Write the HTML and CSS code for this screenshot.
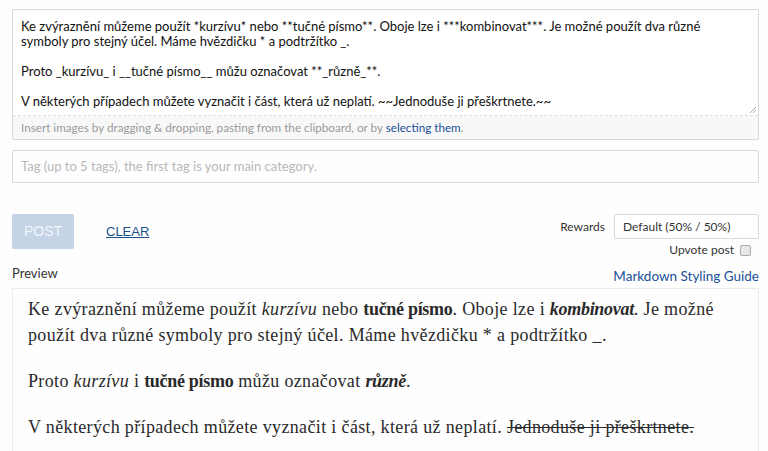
FILE: index.html
```html
<!DOCTYPE html>
<html lang="cs">
<head>
<meta charset="utf-8">
<title>Editor</title>
<link rel="stylesheet" href="styles.css">
</head>
<body>
<div class="page">
  <div class="editor">
    <div class="textarea">
      <p>Ke zvýraznění můžeme použít *kurzívu* nebo **tučné písmo**. Oboje lze i ***kombinovat***. Je možné použít dva různé symboly pro stejný účel. Máme hvězdičku * a podtržítko _.</p>
      <p>Proto _kurzívu_ i __tučné písmo__ můžu označovat **_různě_**.</p>
      <p>V některých případech můžete vyznačit i část, která už neplatí. ~~Jednoduše ji přeškrtnete.~~</p>
      <svg class="grip" width="8" height="8" viewBox="0 0 8 8"><path d="M7 1L1 7M7 4L4 7" stroke="#aaa" stroke-width="1"/></svg>
    </div>
    <div class="dropzone">Insert images by dragging &amp; dropping, pasting from the clipboard, or by <a href="#">selecting them</a>.</div>
  </div>

  <div class="tags">Tag (up to 5 tags), the first tag is your main category.</div>

  <div class="actions">
    <div class="buttons">
      <span class="post">POST</span>
      <a class="clear" href="#">CLEAR</a>
    </div>
    <div class="options">
      <div class="rewards">
        <span class="label">Rewards</span>
        <span class="select">Default (50% / 50%)</span>
      </div>
      <div class="upvote">
        <span>Upvote post</span>
        <span class="checkbox"></span>
      </div>
    </div>
  </div>

  <div class="preview-head">
    <span class="preview-label">Preview</span>
    <a class="guide" href="#">Markdown Styling Guide</a>
  </div>

  <div class="preview">
    <p>Ke zvýraznění můžeme použít <em>kurzívu</em> nebo <strong>tučné písmo</strong>. Oboje lze i <strong><em>kombinovat</em></strong>. Je možné použít dva různé symboly pro stejný účel. Máme hvězdičku * a podtržítko _.</p>
    <p>Proto <em>kurzívu</em> i <strong>tučné písmo</strong> můžu označovat <strong><em>různě</em></strong>.</p>
    <p>V některých případech můžete vyznačit i část, která už neplatí. <del>Jednoduše ji přeškrtnete.</del></p>
  </div>
</div>
</body>
</html>
```
FILE: styles.css
```css
html, body {
  margin: 0;
  padding: 0;
  background: #fefefe;
}

.page {
  padding: 9px 9px 0 12px;
  font-family: "Lato", "Open Sans", sans-serif;
  color: #333;
}

.editor {
  border: 1px solid #d8d8d8;
  border-radius: 2px;
  background: #fff;
}

.textarea {
  position: relative;
  height: 96px;
  padding: 9px 8px 0 8px;
  font-size: 13px;
  line-height: 15px;
  color: #111;
  border-bottom: 1px dashed #dedede;
}

.textarea p {
  margin: 0 0 15px 0;
}

.grip {
  position: absolute;
  right: 1px;
  bottom: 1px;
}

.dropzone {
  background: #f8f8f8;
  height: 23px;
  line-height: 23px;
  padding: 0 8px;
  font-size: 11.7px;
  color: #9a9a9a;
}

.dropzone a {
  color: #1a5099;
  text-decoration: none;
}

.tags {
  margin-top: 10px;
  height: 31px;
  border: 1px solid #d8d8d8;
  border-radius: 2px;
  line-height: 31px;
  padding: 0 8px;
  font-size: 13px;
  color: #b8b8b8;
}

.actions {
  margin-top: 31px;
  height: 45px;
  display: flex;
  justify-content: space-between;
  align-items: flex-start;
}

.buttons {
  display: flex;
  align-items: center;
  gap: 32px;
}

.post {
  display: block;
  width: 62px;
  height: 35px;
  line-height: 35px;
  text-align: center;
  background: #c5d3e6;
  color: #f4f6fa;
  border-radius: 2px;
  font-family: "Liberation Sans", Arial, sans-serif;
  font-size: 14px;
}

.clear {
  font-family: "Liberation Sans", Arial, sans-serif;
  font-size: 13px;
  color: #1a4f8e;
  text-decoration: underline;
}

.options {
  display: flex;
  flex-direction: column;
  align-items: flex-end;
}

.rewards {
  display: flex;
  align-items: center;
  gap: 9px;
  font-size: 12px;
}

.label {
  color: #333;
}

.select {
  display: block;
  width: 135px;
  height: 23px;
  line-height: 23px;
  padding-left: 8px;
  border: 1px solid #d8d8d8;
  border-radius: 2px;
  background: #fff;
  color: #333;
}

.upvote {
  display: flex;
  align-items: center;
  gap: 6px;
  margin-top: 3px;
  margin-right: 8px;
  font-size: 12px;
  line-height: 16px;
  color: #333;
}

.checkbox {
  display: block;
  width: 9px;
  height: 9px;
  border: 1px solid #aaa;
  border-radius: 2px;
  background: #e8e8e8;
}

.preview-head {
  display: flex;
  justify-content: space-between;
  align-items: flex-end;
  height: 29px;
}

.preview-label {
  font-size: 13px;
  color: #333;
  line-height: 18px;
  margin-bottom: 6px;
}

.guide {
  font-size: 13.5px;
  color: #1a5099;
  text-decoration: none;
  line-height: 18px;
  margin-bottom: 3px;
}

.preview {
  border: 1px solid #ececec;
  border-bottom: 0;
  padding: 7px 12px 0 15px;
  height: 200px;
  font-family: "Liberation Serif", "DejaVu Serif", serif;
  font-size: 18px;
  line-height: 26px;
  letter-spacing: 0.35px;
  color: #2a2a2a;
}

.preview p {
  margin: 0 0 20px 0;
}

.preview strong {
  letter-spacing: -0.3px;
}

.preview del {
  text-decoration: line-through;
}
```
